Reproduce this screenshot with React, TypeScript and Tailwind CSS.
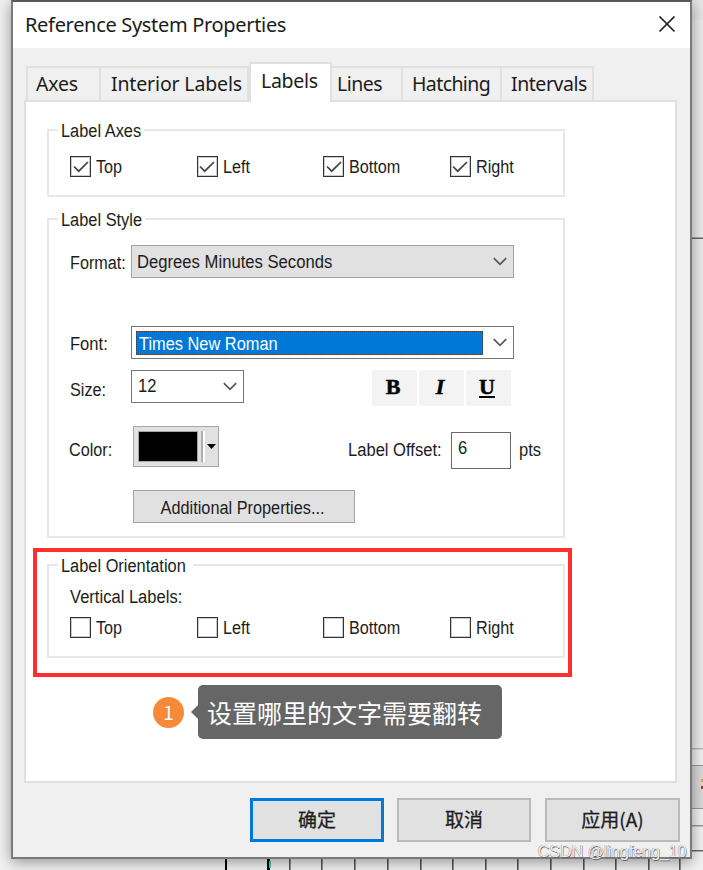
import React from 'react'

const tabs = [
  { name: 'Axes', box: 'w-[75px] pl-[8px]', text: 'tracking-[-0.2px]' },
  { name: 'Interior Labels', box: 'w-[148px] pl-[10px]', text: 'tracking-[-0.15px]' },
  { name: 'Labels', box: 'w-[83px] pl-[10px]', text: 'tracking-[-0.3px]', active: true },
  { name: 'Lines', box: 'w-[71px] pl-[5px]', text: 'tracking-[-0.5px]' },
  { name: 'Hatching', box: 'w-[99px] pl-[9px]', text: 'tracking-[-0.6px]' },
  { name: 'Intervals', box: 'w-[92px] pl-[9px]', text: 'tracking-[-0.45px]' },
]

const sides = ['Top', 'Left', 'Bottom', 'Right']

// grid lines of the map window that show under the dialog
const gridLines = [290, 322, 355, 388, 421, 453, 486, 518, 551, 584, 616, 649, 680]

// condensed label text
function Text({ className = 'origin-left scale-x-[0.92]', children }: { className?: string; children: React.ReactNode }) {
  return <span className={`inline-block whitespace-nowrap ${className}`}>{children}</span>
}

function CheckRow({ checked = false }: { checked?: boolean }) {
  return (
    <div className="flex h-[21px] pl-[21px]">
      {sides.map((side) => (
        <label key={side} className="flex h-[21px] w-[126.5px] shrink-0 items-center gap-[5px] last:w-auto">
          <span className="flex h-[21px] w-[21px] shrink-0 items-center justify-center border border-[#333] bg-white shadow-[inset_0_0_0_1px_#33333340]">
            {checked && (
              <svg width="18" height="18" viewBox="0 0 18 18" fill="none" stroke="#444" strokeWidth="1.7">
                <path d="M2 8.5L6.7 13.2L16 4" />
              </svg>
            )}
          </span>
          <Text className="origin-left scale-x-[0.9] pt-[2px] leading-[21px]">{side}</Text>
        </label>
      ))}
    </div>
  )
}

function Group({ title, className, children }: { title: string; className: string; children: React.ReactNode }) {
  return (
    <fieldset className={`w-[518px] min-w-0 border-2 border-[#e7e7e7] ${className}`}>
      <legend className="ml-[9px] h-5 pl-[3px] pr-1 leading-[22px]">
        <Text className="-mr-[9px] origin-left scale-x-[0.91]">{title}</Text>
      </legend>
      {children}
    </fieldset>
  )
}

function Chevron() {
  return (
    <svg className="mr-[6px] shrink-0" width="14" height="9" viewBox="0 0 14 9" fill="none" stroke="#555" strokeWidth="1.7">
      <path d="M0.8 1.2L7 7.4L13.2 1.2" />
    </svg>
  )
}

export default function App() {
  return (
    <div className="relative h-[870px] w-[703px] overflow-hidden bg-[#f2f2f2] font-['Liberation_Sans',Arial,sans-serif] text-[18px] text-[#1c1c1c]">
      {/* ===== Map window behind the dialog ===== */}
      <svg className="absolute inset-0" width="703" height="870">
        <rect x="690" y="0" width="13" height="20" fill="#e6e6e6" />
        <rect x="690" y="20" width="13" height="728" fill="#ececec" />
        <rect x="690" y="237.5" width="13" height="1.5" fill="#666" />
        <rect x="690" y="748" width="13" height="1.5" fill="#bbb" />
        <rect x="690" y="765.5" width="20" height="43" fill="#d9d9d9" stroke="#999" />
        <rect x="690" y="825" width="13" height="1.5" fill="#999" />
        <rect x="690" y="850" width="13" height="1.5" fill="#666" />
        <rect x="701" y="779" width="2" height="3" fill="#e0a050" />
        <rect x="701" y="786" width="2" height="3" fill="#a04828" />
        {gridLines.map((x) => (
          <rect key={x} x={x - 1} y="858" width="1.6" height="12" fill="#555" />
        ))}
        <rect x="225" y="858" width="2" height="12" fill="#000" />
        <rect x="267" y="858" width="3" height="12" fill="#000" />
        <rect x="269" y="861" width="2" height="7" fill="#3cc" />
      </svg>

      {/* ===== Dialog ===== */}
      <div className="relative ml-[11px] flex h-[859px] w-[681px] flex-col border-2 border-[#7a7a7a] border-t-[#5a5a5a] bg-[#f0f0f0] shadow-[0_3px_14px_rgba(0,0,0,0.4)]">
        <header className="flex h-[46px] items-center justify-between bg-white pl-[12px] pr-[14px] font-['Noto_Sans','Open_Sans',sans-serif]">
          <h1 className="text-[20px] tracking-[-0.32px]">Reference System Properties</h1>
          <svg width="18" height="18" viewBox="0 0 18 18" stroke="#222" strokeWidth="1.7">
            <path d="M1.5 0.5L16.5 15.5M16.5 0.5L1.5 15.5" />
          </svg>
        </header>

        <nav className="flex h-[52px] items-end pl-[13px] font-['Noto_Sans','Open_Sans',sans-serif] text-[19.5px]">
          {tabs.map((tab) => (
            <div
              key={tab.name}
              className={
                tab.active
                  ? `z-10 -mb-[2px] h-[40px] border-x-2 border-t-2 border-[#e0e0e0] bg-white leading-[34px] ${tab.box}`
                  : `h-[34px] border-t-2 border-r-2 border-[#e0e0e0] leading-[32px] first:border-l-2 ${tab.box}`
              }
            >
              <span className={`whitespace-nowrap ${tab.text}`}>{tab.name}</span>
            </div>
          ))}
        </nav>

        <main className="ml-[11px] h-[683px] w-[653px] border-2 border-[#e0e0e0] bg-white">
          <Group title="Label Axes" className="ml-[21px] mt-[18px] h-[77px]">
            <div className="pt-[16px]">
              <CheckRow checked />
            </div>
          </Group>

          <Group title="Label Style" className="ml-[21px] mt-[12px] h-[329px]">
            <div className="mt-[16px] flex h-[33px] items-center">
              <span className="w-[82px] pl-[21px] pt-[4px]">
                <Text className="origin-left scale-x-[0.9]">Format:</Text>
              </span>
              <div className="flex h-[33px] w-[383px] items-center justify-between border border-[#a3a3a3] bg-[#e1e1e1] pl-[5px]">
                <Text className="origin-left scale-x-[0.925] pt-px">Degrees Minutes Seconds</Text>
                <Chevron />
              </div>
            </div>

            <div className="mt-[48px] flex h-[33px] items-center">
              <span className="w-[82px] pl-[21px] pt-[4px]">
                <Text>Font:</Text>
              </span>
              <div className="flex h-[33px] w-[383px] items-center justify-between border border-[#777] bg-white pl-[4px]">
                <div className="h-[24px] w-[347px] border border-dotted border-[#f08030] bg-[#0078d7] pl-[2px] leading-[24px] text-white outline-1 -outline-offset-1 outline-dotted outline-black/60">
                  <Text className="origin-left scale-x-[0.91]">Times New Roman</Text>
                </div>
                <Chevron />
              </div>
            </div>

            <div className="mt-[11px] flex h-[36px] items-start">
              <span className="w-[82px] pl-[21px] pt-[7px]">
                <Text className="origin-left scale-x-[0.9]">Size:</Text>
              </span>
              <div className="flex h-[33px] w-[113px] items-center justify-between border border-[#777] bg-white pl-[6px]">
                <Text>12</Text>
                <Chevron />
              </div>
              <div className="ml-[128px] flex gap-[2px] pr-[2px] text-center font-['Liberation_Serif',serif] text-[22px] font-bold leading-[34px] text-black [-webkit-text-stroke:0.5px_#000]">
                <span className="h-[36px] w-[45px] bg-[#f3f3f3] pr-[3px]">B</span>
                <span className="h-[36px] w-[45px] bg-[#f3f3f3] pr-[3px] italic">I</span>
                <span className="h-[36px] w-[45px] bg-[#f3f3f3] pr-[3px] underline decoration-2 underline-offset-2">U</span>
              </div>
            </div>

            <div className="mt-[20px] flex h-[43px] items-start">
              <span className="w-[84px] pl-[20px] pt-[11px]">
                <Text className="origin-left scale-x-[0.9]">Color:</Text>
              </span>
              <div className="flex h-[41px] w-[86px] items-center border border-[#a8a8a8] bg-[#e1e1e1] pl-[4px]">
                <span className="h-[31px] w-[60px] border border-[#a8a8a8] bg-black" />
                <span className="ml-[3px] h-[31px] w-[4px] border-l-2 border-r-2 border-l-[#b0b0b0] border-r-white" />
                <svg className="ml-[2px]" width="9" height="5">
                  <path d="M0 0H9L4.5 5Z" fill="#000" />
                </svg>
              </div>
              <span className="ml-[129px] w-[103px] pt-[11px]">
                <Text>Label Offset:</Text>
              </span>
              <div className="mt-[6px] h-[37px] w-[60px] border border-[#6a6a6a] bg-white pl-[6px] leading-[30px]">
                <Text>6</Text>
              </div>
              <span className="pl-[8px] pt-[11px]">
                <Text>pts</Text>
              </span>
            </div>

            <div className="ml-[84px] mt-[21px] h-[33px] w-[222px] border border-[#a3a3a3] bg-[#e1e1e1] text-center leading-[34px]">
              <Text className="-ml-[2px] origin-center scale-x-[0.905]">Additional Properties...</Text>
            </div>
          </Group>

          {/* highlighted group */}
          <div className="ml-[7px] mt-[10px] h-[129px] w-[539px] border-4 border-[#ff2f2f] pl-[10px] pt-[3px]">
            <Group title="Label Orientation" className="h-[103px]">
              <p className="mb-[9px] mt-[11px] h-[22px] pl-[21px] leading-[22px]">
                <Text>Vertical Labels:</Text>
              </p>
              <CheckRow />
            </Group>
          </div>

          <div className="ml-[127px] mt-[8px] flex h-[54px] items-center font-['Noto_Sans_CJK_SC',sans-serif] text-white">
            <span className="h-[31px] w-[31px] rounded-full bg-[#f78a38] text-center text-[19px] leading-[29px]">1</span>
            <svg className="ml-[7px]" width="7" height="14">
              <path d="M7 0V14L0 7Z" fill="#666" />
            </svg>
            <p className="h-[54px] w-[304px] rounded-[5px] bg-[#666] pl-[9px] text-[25px] leading-[54px]">
              设置哪里的文字需要翻转
            </p>
          </div>
        </main>

        <footer className="mt-[15px] flex justify-end pr-[10px] text-center font-['Noto_Sans_CJK_SC',sans-serif] text-[19px] leading-[36px]">
          <button className="mr-[13px] h-[44px] w-[134px] border-[3px] border-[#0078d7] bg-[#e1e1e1] pb-[2px] [-webkit-text-stroke:0.3px_#1c1c1c]">确定</button>
          <button className="mr-[14px] h-[44px] w-[134px] border-2 border-[#bababa] bg-[#e1e1e1] pb-[2px] [-webkit-text-stroke:0.3px_#1c1c1c]">取消</button>
          <button className="h-[44px] w-[135px] border-2 border-[#bababa] bg-[#e1e1e1] pb-[2px] [-webkit-text-stroke:0.3px_#1c1c1c]">应用(A)</button>
        </footer>
      </div>

      {/* watermark */}
      <span className="absolute left-[538px] top-[842px] whitespace-nowrap font-['Liberation_Sans',sans-serif] text-[16px] leading-[20px] text-[#ececec] [text-shadow:-0.5px_-0.5px_0_#999,0.5px_0.5px_0.5px_#666]">
        CSDN @lingfeng_10
      </span>
    </div>
  )
}
